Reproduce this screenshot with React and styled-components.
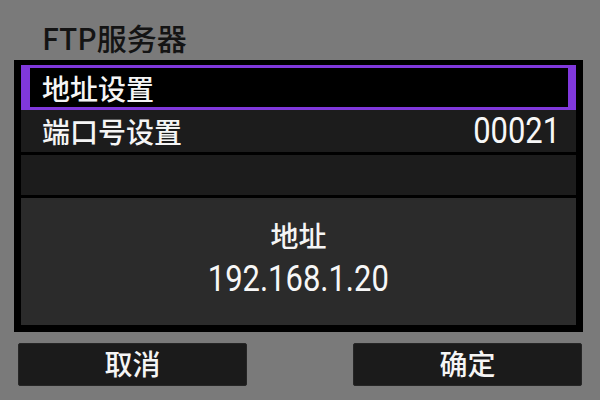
import React from 'react'
import styled, { createGlobalStyle } from 'styled-components'

const GlobalStyle = createGlobalStyle`
    html, body {
        margin: 0;
        padding: 0;
        background: #7a7a7a;
    }
    * {
        box-sizing: border-box;
    }
`

const cjk = `'Noto Sans CJK SC', 'Noto Sans', sans-serif`

const Screen = styled.div`
    width: 600px;
    height: 400px;
    background: #7a7a7a;
    display: flex;
    flex-direction: column;
    font-family: ${cjk};
    overflow: hidden;
`

const Title = styled.div`
    height: 60px;
    padding: 19px 0 0 42px;
    line-height: 36px;
    font-size: 30px;
    font-weight: 500;
    color: #141414;
`

const Panel = styled.div`
    margin-left: 14px;
    width: 569px;
    height: 272px;
    border: 7px solid #000;
    border-top-width: 5px;
    display: flex;
    flex-direction: column;
    background: #000;
`

const SelectedRow = styled.div`
    height: 45px;
    background: #000;
    border: 3px solid #8038dc;
    border-left-width: 9px;
    border-right-width: 8px;
    padding-left: 12px;
    display: flex;
    align-items: center;
    font-size: 28px;
    font-weight: 500;
    color: #f5f5f5;
`

const Row = styled.div`
    height: ${p => p.$height}px;
    background: #1c1c1c;
    border-bottom: 3px solid #000;
    padding: 0 16px 0 21px;
    display: flex;
    align-items: center;
    justify-content: space-between;
    font-size: 28px;
    font-weight: 500;
    color: #f5f5f5;
`

const Num = styled.span`
    display: inline-block;
    font-family: Roboto, 'Liberation Sans', sans-serif;
    font-size: 36px;
    font-weight: 400;
    color: #f7f7f7;
    transform: scaleX(0.86);
    transform-origin: ${p => p.$origin || 'center'};
`

const Info = styled.div`
    flex: 1;
    background: #2b2b2b;
    display: flex;
    flex-direction: column;
    align-items: center;
    justify-content: center;
`

const InfoLabel = styled.div`
    line-height: 40px;
    font-size: 28px;
    font-weight: 500;
    color: #f5f5f5;
`

const InfoValue = styled.div`
    line-height: 48px;
`

const Buttons = styled.div`
    margin-top: 11px;
    padding: 0 18px;
    display: flex;
    justify-content: space-between;
`

const Button = styled.div`
    width: 229px;
    height: 43px;
    padding-bottom: 3px;
    background: #1b1b1b;
    border: 1px solid #262626;
    border-radius: 2px;
    display: flex;
    align-items: center;
    justify-content: center;
    font-size: 28px;
    font-weight: 500;
    color: #f5f5f5;
`

const App = () => {
    return (
        <Screen>
            <GlobalStyle />
            <Title>FTP服务器</Title>
            <Panel>
                <SelectedRow>地址设置</SelectedRow>
                <Row $height={45}>
                    <span>端口号设置</span>
                    <Num $origin='right'>00021</Num>
                </Row>
                <Row $height={43} />
                <Info>
                    <InfoLabel>地址</InfoLabel>
                    <InfoValue>
                        <Num>192.168.1.20</Num>
                    </InfoValue>
                </Info>
            </Panel>
            <Buttons>
                <Button>取消</Button>
                <Button>确定</Button>
            </Buttons>
        </Screen>
    )
}

export default App
